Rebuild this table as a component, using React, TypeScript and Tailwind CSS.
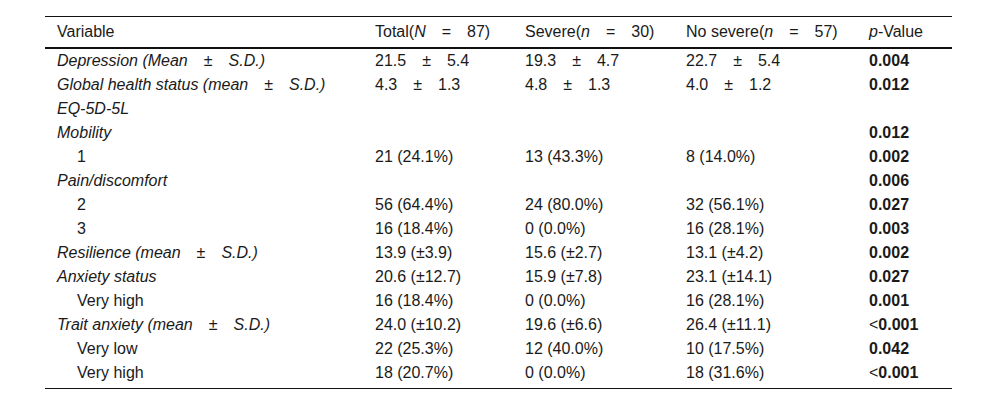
import type { ReactNode } from "react";

type Row = {
  label: ReactNode;
  italic?: boolean;
  indent?: boolean;
  total?: ReactNode;
  severe?: ReactNode;
  noSevere?: ReactNode;
  p?: ReactNode;
};

// mean ± sd, spaced with em spaces like the source table
const pm = (a: string, b: string) => `${a}\u2003±\u2003${b}`;

function Eq({ sym, val }: { sym: string; val: string }) {
  return (
    <>
      (<i>{sym}</i>
      {"\u2003=\u2003"}
      {val})
    </>
  );
}

const lessThan = (
  <>
    <span className="font-normal">&lt;</span>0.001
  </>
);

const rows: Row[] = [
  {
    label: pm("Depression (Mean", "S.D.)"),
    italic: true,
    total: pm("21.5", "5.4"),
    severe: pm("19.3", "4.7"),
    noSevere: pm("22.7", "5.4"),
    p: "0.004",
  },
  {
    label: pm("Global health status (mean", "S.D.)"),
    italic: true,
    total: pm("4.3", "1.3"),
    severe: pm("4.8", "1.3"),
    noSevere: pm("4.0", "1.2"),
    p: "0.012",
  },
  { label: "EQ-5D-5L", italic: true },
  { label: "Mobility", italic: true, p: "0.012" },
  { label: "1", indent: true, total: "21 (24.1%)", severe: "13 (43.3%)", noSevere: "8 (14.0%)", p: "0.002" },
  { label: "Pain/discomfort", italic: true, p: "0.006" },
  { label: "2", indent: true, total: "56 (64.4%)", severe: "24 (80.0%)", noSevere: "32 (56.1%)", p: "0.027" },
  { label: "3", indent: true, total: "16 (18.4%)", severe: "0 (0.0%)", noSevere: "16 (28.1%)", p: "0.003" },
  {
    label: pm("Resilience (mean", "S.D.)"),
    italic: true,
    total: "13.9 (±3.9)",
    severe: "15.6 (±2.7)",
    noSevere: "13.1 (±4.2)",
    p: "0.002",
  },
  { label: "Anxiety status", italic: true, total: "20.6 (±12.7)", severe: "15.9 (±7.8)", noSevere: "23.1 (±14.1)", p: "0.027" },
  { label: "Very high", indent: true, total: "16 (18.4%)", severe: "0 (0.0%)", noSevere: "16 (28.1%)", p: "0.001" },
  {
    label: pm("Trait anxiety (mean", "S.D.)"),
    italic: true,
    total: "24.0 (±10.2)",
    severe: "19.6 (±6.6)",
    noSevere: "26.4 (±11.1)",
    p: lessThan,
  },
  { label: "Very low", indent: true, total: "22 (25.3%)", severe: "12 (40.0%)", noSevere: "10 (17.5%)", p: "0.042" },
  { label: "Very high", indent: true, total: "18 (20.7%)", severe: "0 (0.0%)", noSevere: "18 (31.6%)", p: lessThan },
];

export default function App() {
  return (
    <div className="h-[404px] w-[1000px] bg-white pt-[16px] pl-[45px] font-['Liberation_Sans',Arial,sans-serif] text-[16px] text-[#1a1a1a]">
      <table className="w-[907px] table-fixed border-collapse whitespace-pre">
        <colgroup>
          <col className="w-[318px]" />
          <col className="w-[150px]" />
          <col className="w-[161px]" />
          <col className="w-[183px]" />
          <col className="w-[95px]" />
        </colgroup>
        <thead>
          <tr className="h-[31px] border-t border-b-2 border-t-[#111] border-b-[#111] text-left">
            <th className="pl-[12px] font-normal">Variable</th>
            <th className="pl-[12px] font-normal">
              Total<Eq sym="N" val="87" />
            </th>
            <th className="pl-[12px] font-normal">
              Severe<Eq sym="n" val="30" />
            </th>
            <th className="pl-[12px] font-normal">
              No severe<Eq sym="n" val="57" />
            </th>
            <th className="pl-[12px] font-normal">
              <i>p</i>-Value
            </th>
          </tr>
        </thead>
        <tbody className="border-b border-b-[#111]">
          {rows.map((row, i) => {
            const last = i === rows.length - 1;
            const cell = `pl-[12px] ${last ? "pb-[3px]" : ""}`;
            return (
              <tr key={i} className="leading-[24px]">
                <td
                  className={`${row.indent ? "pl-[32px]" : "pl-[12px]"} ${row.italic ? "italic" : ""} ${last ? "pb-[3px]" : ""}`}>
                  {row.label}
                </td>
                <td className={cell}>{row.total}</td>
                <td className={cell}>{row.severe}</td>
                <td className={cell}>{row.noSevere}</td>
                <td className={`${cell} font-bold`}>{row.p}</td>
              </tr>
            );
          })}
        </tbody>
      </table>
    </div>
  );
}
